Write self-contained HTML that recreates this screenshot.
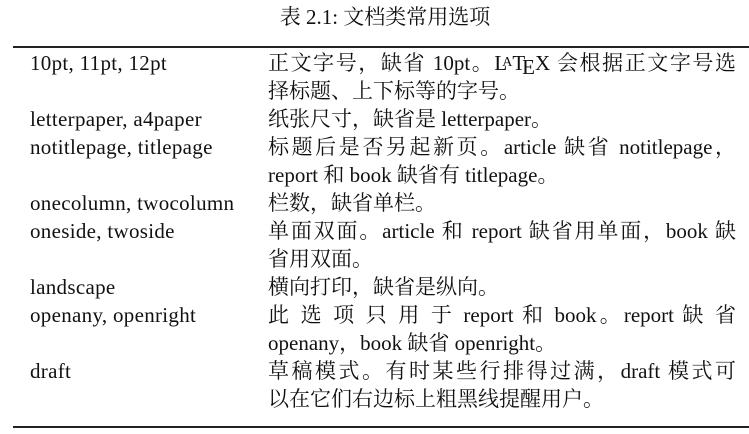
<!DOCTYPE html>
<html><head><meta charset="utf-8"><style>
body{margin:0;width:749px;height:434px;background:#fff;position:relative;overflow:hidden;
font-family:"Liberation Serif","Noto Serif CJK SC",serif;font-size:21px;color:#111;}
.cap{position:absolute;top:3px;left:0;width:770px;text-align:center;font-size:21px;line-height:28px}
.rule{position:absolute;left:13px;width:736px;height:2px;background:#222}
.l,.r{position:absolute;line-height:28px;white-space:nowrap}
.l{left:30px;letter-spacing:0.3px}
.r{left:268px;width:468px}
.j{text-align:justify;text-align-last:justify}
</style></head><body>
<div class="cap">表 2.1: 文档类常用选项</div>
<div class="rule" style="top:46px"></div>
<div class="rule" style="top:426px"></div>

<div class="l" style="top:49px">10pt, 11pt, 12pt</div>
<div class="r j" style="top:49px">正文字号，缺省 10pt。L<span style="font-size:14px;vertical-align:4px;margin-left:-5px">A</span>T<span style="vertical-align:-4px;margin-left:-3px">E</span>X 会根据正文字号选</div>
<div class="r" style="top:77px">择标题、上下标等的字号。</div>

<div class="l" style="top:105px">letterpaper, a4paper</div>
<div class="r" style="top:105px">纸张尺寸，缺省是 letterpaper。</div>

<div class="l" style="top:133px">notitlepage, titlepage</div>
<div class="r j" style="top:133px">标题后是否另起新页。article 缺省 notitlepage，</div>
<div class="r" style="top:161px">report 和 book 缺省有 titlepage。</div>

<div class="l" style="top:189px">onecolumn, twocolumn</div>
<div class="r" style="top:189px">栏数，缺省单栏。</div>

<div class="l" style="top:217px">oneside, twoside</div>
<div class="r j" style="top:217px">单面双面。article 和 report 缺省用单面，book 缺</div>
<div class="r" style="top:245px">省用双面。</div>

<div class="l" style="top:273px">landscape</div>
<div class="r" style="top:273px">横向打印，缺省是纵向。</div>

<div class="l" style="top:301px">openany, openright</div>
<div class="r j" style="top:301px">此 选 项 只 用 于 report 和 book。report 缺 省</div>
<div class="r" style="top:329px">openany，book 缺省 openright。</div>

<div class="l" style="top:357px">draft</div>
<div class="r j" style="top:357px">草稿模式。有时某些行排得过满，draft 模式可</div>
<div class="r" style="top:385px">以在它们右边标上粗黑线提醒用户。</div>
</body></html>
